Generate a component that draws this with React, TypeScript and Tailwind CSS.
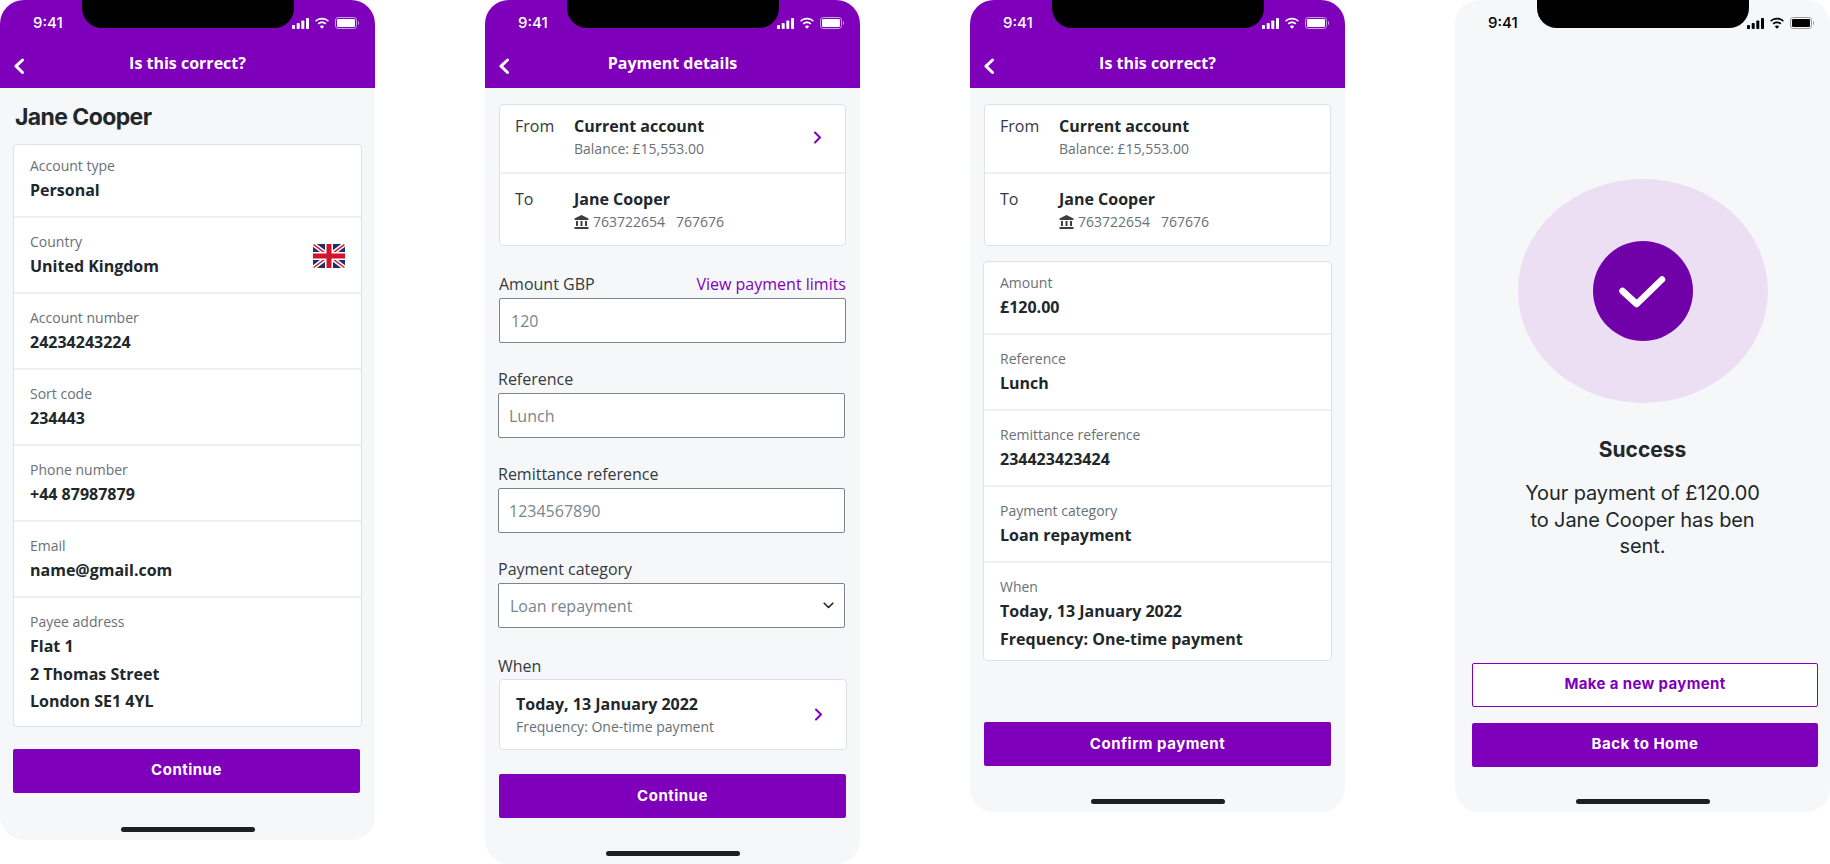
/**
 * Payment flow: four phone screens side by side
 */

import type { ReactNode } from 'react';

function SignalIcon({ color }: { color: string }) {
  return (
    <svg width="17" height="11" viewBox="0 0 17 11" fill={color}>
      <rect x="0" y="7" width="3" height="4" rx="0.8" />
      <rect x="4.7" y="5" width="3" height="6" rx="0.8" />
      <rect x="9.3" y="2.5" width="3" height="8.5" rx="0.8" />
      <rect x="14" y="0" width="3" height="11" rx="0.8" />
    </svg>
  );
}

function WifiIcon({ color }: { color: string }) {
  return (
    <svg width="16" height="12" viewBox="0 0 15 11" fill={color}>
      <path d="M7.5 2.2c2.1 0 4 .8 5.5 2.2l1-1.1C12.200 1.600 10 .6 7.500.6S2.800 1.600 1 3.300l1 1.100c1.500-1.400 3.400-2.200 5.500-2.200z" />
      <path d="M7.500 5.700c1.200 0 2.200.4 3 1.200l1.100-1.100C10.500 4.700 9.100 4.100 7.500 4.100s-3 .6-4.100 1.700l1.100 1.100c.8-.8 1.800-1.200 3-1.200z" />
      <path d="M7.500 10.800l2-2.100c-.5-.5-1.200-.8-2-.8s-1.500.3-2 .8l2 2.100z" />
    </svg>
  );
}

function BatteryIcon({ color, edge }: { color: string; edge: string }) {
  return (
    <svg width="24" height="12" viewBox="0 0 24 12" fill="none">
      <rect x="0.5" y="0.5" width="21" height="11" rx="2.7" stroke={edge} />
      <rect x="2" y="2" width="18" height="8" rx="1.3" fill={color} />
      <path d="M23 4v4c.6-.3 1-1.100 1-2s-.4-1.700-1-2z" fill={edge} />
    </svg>
  );
}

function StatusBar({ dark = false }: { dark?: boolean }) {
  const color = dark ? '#000000' : '#ffffff';
  const edge = dark ? '#9a9a9a' : '#c9a0e2';
  return (
    <div className="h-[44px] flex items-start justify-between pl-[33px] pr-[16px] pt-[14px] shrink-0">
      <span
        className={`text-[15px] leading-[18px] font-medium font-['Inter',sans-serif] ${dark ? 'text-black' : 'text-white'}`}
      >
        9:41
      </span>
      <div className="flex items-center gap-[5px] h-[18px]">
        <SignalIcon color={color} />
        <WifiIcon color={color} />
        <BatteryIcon color={color} edge={edge} />
      </div>
    </div>
  );
}

function Phone({ height, children }: { height: string; children: ReactNode }) {
  return (
    <div className={`relative w-[375px] shrink-0 rounded-[24px] overflow-hidden bg-[#f6f7f9] flex flex-col ${height}`}>
      {/* Notch */}
      <div className="absolute top-0 left-[82px] w-[212px] h-[28px] bg-black rounded-b-[20px]" />
      {children}
      <div className="mt-auto pb-[8px] flex justify-center shrink-0">
        <div className="w-[134px] h-[5px] rounded-full bg-[#1f1f22]" />
      </div>
    </div>
  );
}

function Header({ title }: { title: string }) {
  return (
    <header className="h-[88px] bg-[#7f00bb] shrink-0">
      <StatusBar />
      <div className="grid grid-cols-[1fr_auto_1fr] items-center h-[38px]">
        <svg width="12" height="16" viewBox="0 0 12 16" fill="none" className="ml-[13px] mt-[6px]">
          <path d="M9.500 2L3 8.200 9.500 14.500" stroke="#ffffff" strokeWidth="3" strokeLinecap="round" strokeLinejoin="round" />
        </svg>
        <h1 className="text-[16px] leading-[24px] font-bold text-white">{title}</h1>
        <div />
      </div>
    </header>
  );
}

function Chevron() {
  return (
    <svg width="9" height="13" viewBox="0 0 9 13" fill="none" className="shrink-0">
      <path d="M2 1.500L7 6.500 2 11.500" stroke="#7f00bb" strokeWidth="2" strokeLinecap="round" strokeLinejoin="round" />
    </svg>
  );
}

function BankIcon() {
  return (
    <svg width="15" height="14" viewBox="0 0 15 14" fill="#3a3f44" className="shrink-0">
      <path d="M7.500 0L14.500 3.500V5H.5V3.500z" />
      <rect x="2" y="6" width="2" height="5" />
      <rect x="6.500" y="6" width="2" height="5" />
      <rect x="11" y="6" width="2" height="5" />
      <rect x="0.5" y="12" width="14" height="2" />
    </svg>
  );
}

function UkFlag() {
  return (
    <svg width="32" height="24" viewBox="0 0 32 24" className="shrink-0">
      <defs>
        <clipPath id="flag-clip">
          <rect width="32" height="24" rx="2.500" />
        </clipPath>
      </defs>
      <g clipPath="url(#flag-clip)">
        <rect width="32" height="24" fill="#1d2f6f" />
        <path d="M0 0L32 24M32 0L0 24" stroke="#ffffff" strokeWidth="4.500" />
        <path d="M0 0L16 12M32 0L16 12M0 24L16 12M32 24L16 12" stroke="#cf142b" strokeWidth="1.400" />
        <rect x="12" width="8" height="24" fill="#ffffff" />
        <rect y="8" width="32" height="8" fill="#ffffff" />
        <rect x="13.500" width="5" height="24" fill="#cf142b" />
        <rect y="9.500" width="32" height="5" fill="#cf142b" />
      </g>
    </svg>
  );
}

function Card({ className = '', children }: { className?: string; children: ReactNode }) {
  return <div className={`bg-white border border-[#dde2e7] rounded-[4px] ${className}`}>{children}</div>;
}

function InfoRow({ label, values, first, last, trailing }: {
  label: string;
  values: string[];
  first?: boolean;
  last?: string;
  trailing?: ReactNode;
}) {
  return (
    <div
      className={`flex items-center justify-between pl-[16px] pr-[16px] ${first ? 'pt-[11px]' : 'pt-[14px]'} ${
        last ?? 'pb-[11.5px] border-b-2 border-[#edf0f3]'
      }`}
    >
      <div>
        <div className="text-[14px] leading-[20px] mb-[1px] text-[#697077]">{label}</div>
        {values.map((v) => (
          <div key={v} className="text-[16px] leading-[27.5px] font-bold text-[#21272a]">
            {v}
          </div>
        ))}
      </div>
      {trailing}
    </div>
  );
}

function TransferCard({ showChevron, className = '' }: { showChevron?: boolean; className?: string }) {
  return (
    <Card className={`w-[347px] ${className}`}>
      <div className="flex items-center justify-between pl-[15px] pr-[23px] pt-[9px] pb-[12px] border-b-2 border-[#edf0f3]">
        <div className="flex">
          <div className="w-[59px] text-[16px] leading-[24px] text-[#343a3f]">From</div>
          <div>
            <div className="text-[16px] leading-[24px] font-bold text-[#21272a]">Current account</div>
            <div className="text-[14px] leading-[22px] text-[#697077]">Balance: £15,553.00</div>
          </div>
        </div>
        {showChevron && <Chevron />}
      </div>
      <div className="flex pl-[15px] pt-[13px] pb-[12px]">
        <div className="w-[59px] text-[16px] leading-[24px] text-[#343a3f]">To</div>
        <div>
          <div className="text-[16px] leading-[24px] font-bold text-[#21272a]">Jane Cooper</div>
          <div className="flex items-center gap-[4px] text-[14px] leading-[22px] text-[#697077]">
            <BankIcon />
            <span>763722654</span>
            <span className="ml-[7px]">767676</span>
          </div>
        </div>
      </div>
    </Card>
  );
}

function FieldLabel({ children }: { children: ReactNode }) {
  return <div className="text-[16px] leading-[24px] text-[#343a3f]">{children}</div>;
}

function TextField({ label, value }: { label: string; value: string }) {
  return (
    <div className="mt-[24px] ml-[13px] w-[347px]">
      <FieldLabel>{label}</FieldLabel>
      <div className="mt-[2px] h-[45px] bg-white border border-[#7d858b] rounded-[2px] pl-[10px] flex items-center text-[16px] text-[#7c848a]">
        {value}
      </div>
    </div>
  );
}

function PrimaryButton({ label, className = '' }: { label: string; className?: string }) {
  return (
    <button
      className={`h-[44px] bg-[#7f00bb] rounded-[2px] text-white text-[15px] font-bold tracking-[0.5px] font-['Inter',sans-serif] shrink-0 ${className}`}
    >
      {label}
    </button>
  );
}

function ConfirmPayee() {
  return (
    <Phone height="h-[840px]">
      <Header title="Is this correct?" />
      <h2 className="mt-[13px] ml-[15px] text-[23px] leading-[32px] font-bold text-[#21272a] font-['Inter',sans-serif] tracking-[-0.6px]">
        Jane Cooper
      </h2>
      <Card className="mt-[11px] ml-[13px] w-[349px]">
        <InfoRow first label="Account type" values={['Personal']} />
        <InfoRow label="Country" values={['United Kingdom']} trailing={<UkFlag />} />
        <InfoRow label="Account number" values={['24234243224']} />
        <InfoRow label="Sort code" values={['234443']} />
        <InfoRow label="Phone number" values={['+44 87987879']} />
        <InfoRow label="Email" values={['name@gmail.com']} />
        <InfoRow last="pb-[10px]" label="Payee address" values={['Flat 1', '2 Thomas Street', 'London SE1 4YL']} />
      </Card>
      <PrimaryButton label="Continue" className="mt-[22px] ml-[13px] w-[347px]" />
    </Phone>
  );
}

function PaymentDetails() {
  return (
    <Phone height="h-[864px]">
      <Header title="Payment details" />
      <TransferCard showChevron className="mt-[16px] ml-[14px]" />
      <div className="mt-[26px] ml-[14px] w-[347px]">
        <div className="flex justify-between">
          <FieldLabel>Amount GBP</FieldLabel>
          <span className="text-[16px] leading-[24px] text-[#7f00bb]">View payment limits</span>
        </div>
        <div className="mt-[2px] h-[45px] bg-white border border-[#7d858b] rounded-[2px] pl-[11px] flex items-center text-[16px] text-[#7c848a]">
          120
        </div>
      </div>
      <TextField label="Reference" value="Lunch" />
      <TextField label="Remittance reference" value="1234567890" />
      <div className="mt-[24px] ml-[13px] w-[347px]">
        <FieldLabel>Payment category</FieldLabel>
        <div className="mt-[2px] h-[45px] bg-white border border-[#7d858b] rounded-[2px] pl-[11px] pr-[10px] flex items-center justify-between text-[16px] text-[#7c848a]">
          Loan repayment
          <svg width="11" height="7" viewBox="0 0 11 7" fill="none">
            <path d="M1.200 1.200L5.500 5.500 9.800 1.200" stroke="#21272a" strokeWidth="1.600" strokeLinecap="round" strokeLinejoin="round" />
          </svg>
        </div>
      </div>
      <div className="mt-[26px] ml-[13px]">
        <FieldLabel>When</FieldLabel>
      </div>
      <Card className="mt-[1px] ml-[14px] w-[348px] h-[71px] pl-[16px] pr-[23px] flex items-center justify-between">
        <div>
          <div className="text-[16px] leading-[24px] font-bold text-[#21272a]">Today, 13 January 2022</div>
          <div className="text-[14px] leading-[22px] text-[#697077]">Frequency: One-time payment</div>
        </div>
        <Chevron />
      </Card>
      <PrimaryButton label="Continue" className="mt-[24px] ml-[14px] w-[347px]" />
    </Phone>
  );
}

function ConfirmPayment() {
  return (
    <Phone height="h-[812px]">
      <Header title="Is this correct?" />
      <TransferCard className="mt-[16px] ml-[14px]" />
      <Card className="mt-[15px] ml-[13px] w-[349px]">
        <InfoRow first label="Amount" values={['£120.00']} />
        <InfoRow label="Reference" values={['Lunch']} />
        <InfoRow label="Remittance reference" values={['234423423424']} />
        <InfoRow label="Payment category" values={['Loan repayment']} />
        <InfoRow last="pb-[7px]" label="When" values={['Today, 13 January 2022', 'Frequency: One-time payment']} />
      </Card>
      <PrimaryButton label="Confirm payment" className="mt-[61px] ml-[14px] w-[347px]" />
    </Phone>
  );
}

function PaymentSuccess() {
  return (
    <Phone height="h-[812px]">
      <StatusBar dark />
      <div className="mt-[135px] mx-auto w-[250px] h-[224px] rounded-[50%] bg-[#ecdff3] flex items-center justify-center shrink-0">
        <div className="w-[100px] h-[100px] rounded-full bg-[#7000a8]">
          <svg width="100" height="100" viewBox="0 0 100 100" fill="none">
            <path d="M29.500 50L43.700 63 69 38.500" stroke="#ffffff" strokeWidth="6.500" strokeLinecap="round" strokeLinejoin="round" />
          </svg>
        </div>
      </div>
      <h2 className="mt-[33px] text-center text-[21px] leading-[28px] font-bold text-[#21272a] font-['Inter',sans-serif]">
        Success
      </h2>
      <p className="mt-[16px] text-center text-[20px] leading-[26.5px] text-[#21272a] font-['Inter',sans-serif] tracking-[-0.1px]">
        Your payment of £120.00
        <br />
        to Jane Cooper has ben
        <br />
        sent.
      </p>
      <div className="mt-[103px] ml-[17px] w-[346px] flex flex-col gap-[16px]">
        <button className="h-[44px] bg-white border border-[#7f00bb] rounded-[2px] text-[#7f00bb] text-[15px] font-bold tracking-[0.35px] font-['Inter',sans-serif]">
          Make a new payment
        </button>
        <PrimaryButton label="Back to Home" />
      </div>
    </Phone>
  );
}

export default function App() {
  return (
    <div className="w-[1830px] h-[864px] bg-white flex items-start gap-[110px] overflow-hidden font-['Open_Sans',sans-serif]">
      <ConfirmPayee />
      <PaymentDetails />
      <ConfirmPayment />
      <PaymentSuccess />
    </div>
  );
}
